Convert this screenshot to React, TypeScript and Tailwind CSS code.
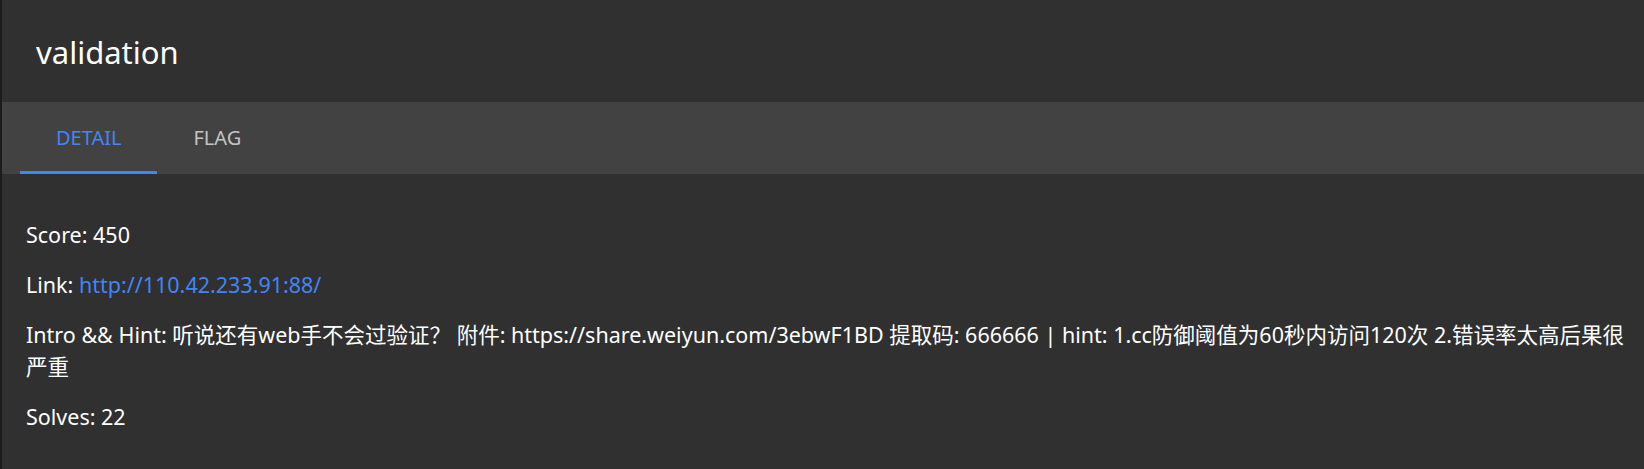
const font = { fontFamily: '"Noto Sans", "Noto Sans CJK SC", sans-serif' }

const App = () => {
    return (
        <div className="flex min-h-screen bg-[#303030] text-white" style={font}>
            <div className="w-[2px] shrink-0 bg-[#1c1c1c]" />
            <div className="flex-1 min-w-0">
                <header className="h-[102px] flex items-center pl-[34px] text-[31px] pt-[2px]">
                    validation
                </header>
                <nav className="h-[72px] bg-[#424242] flex pl-[18px]">
                    <button className="relative px-[36px] text-[20px] text-[#4285f4] uppercase">
                        Detail
                        <span className="absolute left-0 right-0 bottom-0 h-[3px] bg-[#4285f4]" />
                    </button>
                    <button className="px-[36px] text-[20px] text-[#c4c4c4] uppercase">
                        Flag
                    </button>
                </nav>
                <div className="pl-[24px] pt-[45px] text-[21.5px] leading-[32px] flex flex-col gap-[18px]">
                    <p>Score: 450</p>
                    <p>
                        Link: <a className="text-[#4285f4]" href="#">http://110.42.233.91:88/</a>
                    </p>
                    <p>
                        Intro &amp;&amp; Hint: 听说还有web手不会过验证？ 附件: https://share.weiyun.com/3ebwF1BD 提取码: 666666 | hint: 1.cc防御阈值为60秒内访问120次 2.错误率太高后果很严重
                    </p>
                    <p>Solves: 22</p>
                </div>
            </div>
        </div>
    )
}

export default App
